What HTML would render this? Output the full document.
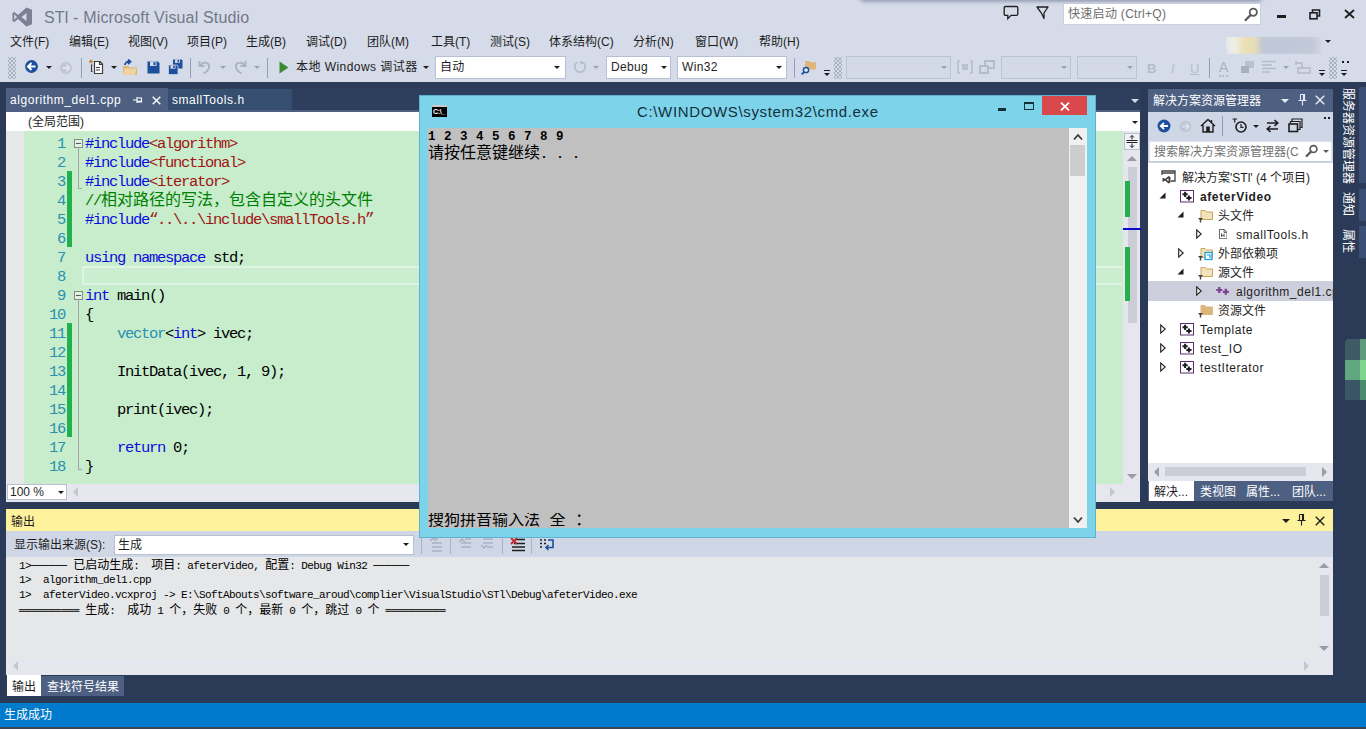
<!DOCTYPE html>
<html lang="zh-CN"><head><meta charset="utf-8"><title>STl - Microsoft Visual Studio</title>
<style>
*{box-sizing:border-box;margin:0;padding:0}
html,body{width:1366px;height:729px;overflow:hidden;background:#d6dbe9}
body{position:relative;font-family:"Liberation Sans","Noto Sans CJK SC",sans-serif;font-size:12px;color:#1e1e1e}
.a{position:absolute}
.t{position:absolute;white-space:nowrap;line-height:1}
.mono{font-family:"Liberation Mono","Noto Sans CJK SC",monospace}

/* top */
#title{left:44px;top:8px;font-size:16px;color:#737888;line-height:19px;letter-spacing:.16px}
.menu{position:absolute;top:34px;font-size:12px;line-height:16px;white-space:nowrap;color:#1b1b1c}
.sep{position:absolute;top:58px;width:1px;height:20px;background:#929db3}
.grip{position:absolute;width:8px;height:22px;top:57px;background-image:radial-gradient(circle,#8d97ab 0.6px,transparent 0.9px),radial-gradient(circle,#8d97ab 0.6px,transparent 0.9px);background-size:4px 4px;background-position:0 0,2px 2px}
.dd{position:absolute;width:0;height:0;border-left:3px solid transparent;border-right:3px solid transparent;border-top:3px solid #1e1e1e}
.dd.dis{border-top-color:#9aa3b5}
.combo{position:absolute;top:56px;height:23px;background:#fff;border:1px solid #b8c1d3;font-size:12px;line-height:21px;padding-left:4px;white-space:nowrap;color:#1e1e1e;letter-spacing:.35px}
.combo.dis{background:#d3d9e7;border-color:#bcc4d4}
.tbt{position:absolute;font-size:12px;line-height:16px;white-space:nowrap}

.w{color:#fff}
.tri-r{position:absolute;width:0;height:0}
.sbar{background:#e5e6ee}
.arr{position:absolute;width:0;height:0}
.row{position:absolute;font-size:12px;line-height:16px;white-space:nowrap;color:#1e1e1e}
.vt{position:absolute;transform-origin:0 0;transform:rotate(90deg);white-space:nowrap;font-size:12px;line-height:14px;color:#fff}
/* main frame */
#dark{left:0;top:82px;width:1366px;height:621px;background:#2a3a57}
#status{left:0;top:703px;width:1366px;height:24px;background:#007acc}
#bottom{left:0;top:727px;width:1366px;height:2px;background:#3b4454}
/* editor */
#tabstrip{left:6px;top:88px;width:1134px;height:22px}
#tab1{left:6px;top:88px;width:162px;height:22px;background:#4d6082}
#tab2{left:168px;top:89px;width:124px;height:21px;background:#364e6f}
#scope{left:6px;top:112px;width:1134px;height:19px;background:#fff}
#code{left:6px;top:131px;width:1134px;height:353px;background:#c7edcc}
#gutter{left:6px;top:131px;width:18px;height:353px;background:#e6e7e8}
#hscroll{left:6px;top:484px;width:1134px;height:17.5px;background:#e5e6ee}
.ln{position:absolute;left:24px;width:41px;text-align:right;color:#2b91af;font-size:15.5px;letter-spacing:-1.3px;margin-top:1.5px;line-height:19px;height:19px}
.cl{position:absolute;left:85px;font-size:15.5px;letter-spacing:-1.3px;margin-top:1.5px;line-height:19px;height:19px;white-space:pre;color:#000}
.cl .c{font-size:16px;letter-spacing:0}
.cl .q{display:inline-block;width:8px;letter-spacing:0;font-size:16px;overflow:visible;white-space:nowrap}
.k{color:#0c0ce0}.s{color:#a31515}.cm{color:#008000}.ty{color:#2b91af}
.chg{position:absolute;left:67px;width:5px;background:#22b14c}
/* output */
#outtitle{left:6px;top:508.5px;width:1327px;height:24px;background:#fff29d}
#outbar{left:6px;top:531px;width:1327px;height:26px;background:#cfd6e5}
#outtext{left:6px;top:557px;width:1327px;height:118px;background:#e6e7e8}
.ol{position:absolute;left:19px;font-size:11px;letter-spacing:-.6px;line-height:15px;height:15px;white-space:pre;color:#000}
.ol .c{font-size:12px;letter-spacing:0}
.ol .bx{font-family:"DejaVu Sans Mono",monospace;font-size:10px;letter-spacing:0}
/* solution explorer */
#setitle{left:1148px;top:89px;width:185px;height:23px;background:#4d6082}
#sebar{left:1148px;top:112px;width:185px;height:52px;background:#cfd6e5}
#sesearch{left:1149px;top:141px;width:183px;height:21px;background:#fff;border:1px solid #dfe3ec;border-bottom-color:#c4cad8}
#setree{left:1148px;top:163px;width:185px;height:318px;background:#fff}
/* cmd */
#cmd{left:419px;top:95px;width:677px;height:442.5px;background:#7dd3ea;border:1px solid #5eb4ce}
#con{left:428px;top:128px;width:658.5px;height:400px;background:#c0c0c0}
#conscroll{left:1069px;top:128px;width:17.5px;height:400px;background:#f0f0f0}
</style></head><body>
<div class="a" id="dark"></div>
<div class="a" id="status"></div>
<div class="a" id="bottom"></div>


<!-- TITLE BAR -->
<div class="a" style="left:862px;top:-5px;width:398px;height:5px;background:#9aa1b5;box-shadow:0 0 4px 1px rgba(80,90,120,.65)"></div>
<svg class="a" style="left:11.5px;top:6.5px" width="20.5" height="20" viewBox="0 0 22 21" preserveAspectRatio="none"><path d="M15.5 0.5 L21.5 3 V18 L15.5 20.5 L6.5 12.5 L2.5 15.8 L0.5 14.8 V6.2 L2.5 5.2 L6.5 8.5 Z M15.5 6.2 L10.2 10.5 L15.5 14.8 Z M2.4 7.6 V13.4 L5.4 10.5 Z" fill="#7b8192" fill-rule="evenodd"/></svg>
<div class="t" id="title">STl - Microsoft Visual Studio</div>
<svg class="a" style="left:1003px;top:5px" width="17" height="16" viewBox="0 0 17 16"><path d="M2.5 1.5 H13.5 Q14.8 1.5 14.8 2.8 V9 Q14.8 10.3 13.5 10.3 H8 L4.8 13.6 V10.3 H2.5 Q1.2 10.3 1.2 9 V2.8 Q1.2 1.5 2.5 1.5 Z" fill="none" stroke="#1e1e1e" stroke-width="1.3"/></svg>
<svg class="a" style="left:1036px;top:6px" width="14" height="14" viewBox="0 0 14 14"><path d="M1 1 H12 L8 7 V12.5 L5.2 6.8 Z" fill="none" stroke="#1e1e1e" stroke-width="1.3" stroke-linejoin="round"/></svg>
<div class="a" style="left:1063px;top:3px;width:198px;height:22px;background:#fff;border:1px solid #c9cfdd"></div>
<div class="t" style="left:1068px;top:7px;font-size:12px;line-height:15px;color:#6d6d6d;letter-spacing:.3px">快速启动 (Ctrl+Q)</div>
<svg class="a" style="left:1244px;top:7px" width="15" height="15" viewBox="0 0 15 15"><circle cx="9.3" cy="5.3" r="3.6" fill="none" stroke="#5b5b5b" stroke-width="1.8"/><path d="M6.6 8 L1.6 13" stroke="#5b5b5b" stroke-width="2.4" stroke-linecap="round"/></svg>
<div class="a" style="left:1277px;top:15px;width:9px;height:3px;background:#1e1e1e"></div>
<svg class="a" style="left:1309px;top:9px" width="12" height="11" viewBox="0 0 12 11"><path d="M3.5 3 V1 H10.5 V7 H8.5" fill="none" stroke="#1e1e1e" stroke-width="1.6"/><rect x="1" y="3.8" width="7" height="6" fill="none" stroke="#1e1e1e" stroke-width="1.6"/></svg>
<svg class="a" style="left:1344px;top:9px" width="11" height="10" viewBox="0 0 11 10"><path d="M1 1 L10 9 M10 1 L1 9" stroke="#1e1e1e" stroke-width="1.8"/></svg>

<!-- MENU -->
<div class="menu" style="left:10px">文件(F)</div>
<div class="menu" style="left:69px">编辑(E)</div>
<div class="menu" style="left:128px">视图(V)</div>
<div class="menu" style="left:187px">项目(P)</div>
<div class="menu" style="left:246px">生成(B)</div>
<div class="menu" style="left:306px">调试(D)</div>
<div class="menu" style="left:367px">团队(M)</div>
<div class="menu" style="left:431px">工具(T)</div>
<div class="menu" style="left:490px">测试(S)</div>
<div class="menu" style="left:549px">体系结构(C)</div>
<div class="menu" style="left:633px">分析(N)</div>
<div class="menu" style="left:695px">窗口(W)</div>
<div class="menu" style="left:759px">帮助(H)</div>
<div class="a" style="left:1226px;top:33px;width:96px;height:23px;filter:blur(3px);background:linear-gradient(90deg,#e9ebf2 0,#f2f0e2 12%,#e9dfb4 16%,#e9dfb4 32%,#bec5d6 36%,#c3c9d9 92%,#d6dbe9 100%);border-radius:4px;clip-path:inset(4px 0 2px 0)"></div>
<div class="dd" style="left:1325px;top:40px"></div>

<!-- TOOLBAR -->
<div class="grip" style="left:8px"></div>
<svg class="a" style="left:24px;top:59px" width="15" height="15" viewBox="0 0 15 15"><circle cx="7.5" cy="7.5" r="6.4" fill="#1c4f9c"/><path d="M11.5 7.5 H4.5 M7.5 4 L4 7.5 L7.5 11" fill="none" stroke="#fff" stroke-width="2"/></svg>
<div class="dd" style="left:46px;top:66px"></div>
<svg class="a" style="left:59px;top:61px" width="14" height="14" viewBox="0 0 14 14"><circle cx="7" cy="7" r="6" fill="#bfc6d4"/><path d="M3.5 7 H10 M7.5 4 L10.5 7 L7.5 10" fill="none" stroke="#dfe3ec" stroke-width="1.8"/></svg>
<div class="sep" style="left:81px"></div>
<svg class="a" style="left:89px;top:59px" width="16" height="17" viewBox="0 0 16 17"><path d="M1 1.5 l2 2 m0 -2 l-2 2 M2 0.5 v4 M0 2.5 h4" stroke="#c27d1a" stroke-width="1"/><path d="M5.5 2.5 H11 L13.5 5 V14.5 H5.5 Z M10.5 2.5 V5.5 H13.5" fill="#fff" stroke="#3b3b3b" stroke-width="1.2"/><path d="M3.5 6 H2.5 V12.5 H3.5 M7 8.5 h4 M7 11 h4" fill="none" stroke="#3b3b3b" stroke-width="1.1"/></svg>
<div class="dd" style="left:111px;top:66px"></div>
<svg class="a" style="left:122px;top:59px" width="16" height="17" viewBox="0 0 16 17"><path d="M1 7 H6 L7.5 8.5 H15 V16 H1 Z" fill="#dcb67a"/><path d="M2.5 9.5 H14.5 L13 16 H1 Z" fill="#efd4a2"/><path d="M3 6 Q3 2.5 8 2.5 M6 0.5 L8.5 2.5 L6 5" fill="none" stroke="#1c4f9c" stroke-width="1.8"/></svg>
<svg class="a" style="left:147px;top:61px" width="13" height="13" viewBox="0 0 13 13"><path d="M0.5 0.5 H11 L12.5 2 V12.5 H0.5 Z" fill="#1c4f9c"/><rect x="3" y="0.5" width="6.5" height="4.5" fill="#d6dbe9"/><rect x="6.5" y="1.2" width="2" height="3" fill="#1c4f9c"/></svg>
<svg class="a" style="left:168px;top:59px" width="15" height="16" viewBox="0 0 15 16"><path d="M5 0.5 H13.5 L14.5 1.5 V9.5 H5 Z" fill="#1c4f9c"/><rect x="7" y="0.5" width="5" height="3.3" fill="#d6dbe9"/><rect x="9.6" y="1" width="1.5" height="2.2" fill="#1c4f9c"/><path d="M0.5 6 H9 L10 7 V15.5 H0.5 Z" fill="#1c4f9c" stroke="#cfd6e5" stroke-width="0.8"/><rect x="2.5" y="6.4" width="5" height="3.3" fill="#d6dbe9"/><rect x="5.2" y="6.9" width="1.5" height="2.2" fill="#1c4f9c"/></svg>
<div class="sep" style="left:190px"></div>
<svg class="a" style="left:198px;top:60px" width="14" height="15" viewBox="0 0 14 15"><path d="M1.5 1 V6 H6.5 M2 5.5 Q5 1.5 9 3 Q12.5 5 10.5 9 Q9 12 5.5 13.5" fill="none" stroke="#a9b1c3" stroke-width="1.8"/></svg>
<div class="dd dis" style="left:220px;top:66px"></div>
<svg class="a" style="left:233px;top:60px" width="14" height="15" viewBox="0 0 14 15"><path d="M12.5 1 V6 H7.5 M12 5.5 Q9 1.5 5 3 Q1.5 5 3.5 9 Q5 12 8.5 13.5" fill="none" stroke="#a9b1c3" stroke-width="1.8"/></svg>
<div class="dd dis" style="left:254px;top:66px"></div>
<div class="sep" style="left:267px"></div>
<svg class="a" style="left:279px;top:61px" width="10" height="13" viewBox="0 0 10 13"><path d="M0.5 0.5 L9.5 6.5 L0.5 12.5 Z" fill="#388a34"/></svg>
<div class="tbt" style="left:296px;top:59px;letter-spacing:.45px;color:#222">本地 Windows 调试器</div>
<div class="dd" style="left:423px;top:66px"></div>
<div class="combo" style="left:435px;width:131px">自动</div>
<div class="dd" style="left:554px;top:66px"></div>
<svg class="a" style="left:573px;top:60px" width="14" height="14" viewBox="0 0 14 14"><path d="M9.5 2.2 A5.3 5.3 0 1 1 4.5 2.2" fill="none" stroke="#b3bac9" stroke-width="1.6"/><path d="M7 0.5 L10.5 2.3 L7.5 4.8 Z" fill="#b3bac9"/></svg>
<div class="dd dis" style="left:593px;top:66px"></div>
<div class="combo" style="left:606px;width:65px">Debug</div>
<div class="dd" style="left:661px;top:66px"></div>
<div class="combo" style="left:677px;width:110px">Win32</div>
<div class="dd" style="left:776px;top:66px"></div>
<div class="sep" style="left:794px"></div>
<svg class="a" style="left:801px;top:60px" width="16" height="16" viewBox="0 0 16 16"><path d="M4 1 H8 L9.2 2.2 H15 V9.5 H4 Z" fill="#dcb67a"/><circle cx="5" cy="10" r="2.6" fill="#e8ecf4" stroke="#1c4f9c" stroke-width="1.5"/><path d="M3.2 11.8 L0.8 14.4" stroke="#1c4f9c" stroke-width="1.8"/></svg>
<div class="a" style="left:824px;top:70px;width:6px;height:1px;background:#1e1e1e"></div>
<div class="dd" style="left:824px;top:73px"></div>
<div class="grip" style="left:834px"></div>
<div class="combo dis" style="left:846px;width:105px"></div>
<div class="dd dis" style="left:941px;top:66px"></div>
<svg class="a" style="left:957px;top:60px" width="16" height="14" viewBox="0 0 16 14"><path d="M3 1 H1 V13 H3 M13 1 H15 V13 H13" fill="none" stroke="#aab2c4" stroke-width="1.2"/><rect x="5" y="4" width="6" height="6" fill="#b9c0d0"/></svg>
<svg class="a" style="left:979px;top:60px" width="16" height="14" viewBox="0 0 16 14"><rect x="6" y="1" width="9" height="7" fill="none" stroke="#aab2c4" stroke-width="1.5"/><rect x="1" y="6" width="8" height="7" fill="#d3d9e7" stroke="#aab2c4" stroke-width="1.5"/></svg>
<div class="combo dis" style="left:1001px;width:70px"></div>
<div class="dd dis" style="left:1061px;top:66px"></div>
<div class="combo dis" style="left:1077px;width:60px"></div>
<div class="dd dis" style="left:1127px;top:66px"></div>
<div class="tbt" style="left:1147px;top:60.5px;font-size:13px;font-weight:bold;color:#b4bbcb">B</div>
<div class="tbt" style="left:1171px;top:60.5px;font-size:13px;font-style:italic;color:#b4bbcb">I</div>
<div class="tbt" style="left:1190px;top:60.5px;font-size:13px;text-decoration:underline;color:#b4bbcb">U</div>
<div class="sep" style="left:1209px"></div>
<div class="tbt" style="left:1219px;top:59.5px;font-size:14px;color:#aab2c4;border-bottom:2px dotted #b4bbcb;line-height:15px">A</div>
<svg class="a" style="left:1240px;top:60px" width="15" height="15" viewBox="0 0 15 15"><rect x="5" y="1" width="9" height="7" fill="#b9c0d0"/><rect x="1" y="6" width="8" height="7" fill="#a7afc1"/></svg>
<svg class="a" style="left:1262px;top:60px" width="15" height="14" viewBox="0 0 15 14"><path d="M0 1.5 H14 M0 5 H10 M0 8.5 H14 M0 12 H8" stroke="#b4bbcb" stroke-width="1.5"/></svg>
<div class="dd dis" style="left:1283px;top:66px"></div>
<svg class="a" style="left:1295px;top:60px" width="16" height="15" viewBox="0 0 16 15"><path d="M1 3 H7 V8 M1 1 V5" fill="none" stroke="#b4bbcb" stroke-width="1.5"/><rect x="3" y="8" width="12" height="5" fill="none" stroke="#b4bbcb" stroke-width="1.5"/></svg>
<div class="a" style="left:1319px;top:70px;width:6px;height:1px;background:#1e1e1e"></div>
<div class="dd" style="left:1319px;top:73px"></div>
<div class="grip" style="left:1329px"></div>
<div class="a" style="left:1342px;top:61px;width:2px;height:2px;background:#1e1e1e"></div>
<div class="a" style="left:1347px;top:61px;width:2px;height:2px;background:#1e1e1e"></div>
<div class="a" style="left:1341px;top:70px;width:6px;height:1px;background:#1e1e1e"></div>
<div class="dd" style="left:1341px;top:73px"></div>

<!-- EDITOR -->
<div class="a" style="left:6px;top:88px;width:1134px;height:22px;background:#2e3f5e"></div>
<div class="a" id="tab1"></div>
<div class="a" id="tab2"></div>
<div class="a" id="scope"></div>
<div class="a" id="code"></div>
<div class="a" id="gutter"></div>
<div class="a" id="hscroll"></div>
<div class="a" style="left:6px;top:110px;width:1134px;height:2px;background:#4d6082"></div>
<div class="t w" style="left:10px;top:92px;font-size:12px;line-height:16px;letter-spacing:.55px">algorithm_del1.cpp</div>
<svg class="a" style="left:133px;top:95px" width="10" height="10" viewBox="0 0 10 10"><path d="M0 5 H4 M4 2 V8 M4 3 H8.5 V7 H4 M4 6.2 H8.5" fill="none" stroke="#fff" stroke-width="1.1"/></svg>
<svg class="a" style="left:152px;top:96px" width="9" height="9" viewBox="0 0 9 9"><path d="M0.7 0.7 L8.3 8.3 M8.3 0.7 L0.7 8.3" stroke="#fff" stroke-width="1.4"/></svg>
<div class="t w" style="left:172px;top:92px;font-size:12px;line-height:16px;letter-spacing:.55px;letter-spacing:.55px">smallTools.h</div>
<div class="arr" style="left:1131px;top:99px;border-left:4px solid transparent;border-right:4px solid transparent;border-top:4px solid #d6dbe9"></div>
<div class="t" style="left:28px;top:114px;font-size:12px;line-height:16px">(全局范围)</div>
<div class="dd" style="left:1132px;top:121px"></div>


<!-- CODE -->
<div class="ln mono" style="top:133px">1</div>
<div class="cl mono" style="top:133px"><span class="k">#include</span><span class="s">&lt;algorithm&gt;</span></div>
<div class="ln mono" style="top:152px">2</div>
<div class="cl mono" style="top:152px"><span class="k">#include</span><span class="s">&lt;functional&gt;</span></div>
<div class="ln mono" style="top:171px">3</div>
<div class="cl mono" style="top:171px"><span class="k">#include</span><span class="s">&lt;iterator&gt;</span></div>
<div class="ln mono" style="top:190px">4</div>
<div class="cl mono" style="top:190px"><span class="cm">//<span class="c">相对路径的写法，包含自定义的头文件</span></span></div>
<div class="ln mono" style="top:209px">5</div>
<div class="cl mono" style="top:209px"><span class="k">#include</span><span class="s"><span class="q">“</span>..\..\include\smallTools.h<span class="q">”</span></span></div>
<div class="ln mono" style="top:228px">6</div>
<div class="ln mono" style="top:247px">7</div>
<div class="cl mono" style="top:247px"><span class="k">using</span> <span class="k">namespace</span> std;</div>
<div class="ln mono" style="top:266px">8</div>
<div class="ln mono" style="top:285px">9</div>
<div class="cl mono" style="top:285px"><span class="k">int</span> main()</div>
<div class="ln mono" style="top:304px">10</div>
<div class="cl mono" style="top:304px">{</div>
<div class="ln mono" style="top:323px">11</div>
<div class="cl mono" style="top:323px">    <span class="ty">vector</span>&lt;<span class="k">int</span>&gt; ivec;</div>
<div class="ln mono" style="top:342px">12</div>
<div class="ln mono" style="top:361px">13</div>
<div class="cl mono" style="top:361px">    InitData(ivec, 1, 9);</div>
<div class="ln mono" style="top:380px">14</div>
<div class="ln mono" style="top:399px">15</div>
<div class="cl mono" style="top:399px">    print(ivec);</div>
<div class="ln mono" style="top:418px">16</div>
<div class="ln mono" style="top:437px">17</div>
<div class="cl mono" style="top:437px">    <span class="k">return</span> 0;</div>
<div class="ln mono" style="top:456px">18</div>
<div class="cl mono" style="top:456px">}</div>
<div class="chg" style="top:171px;height:76px"></div>
<div class="chg" style="top:323px;height:114px"></div>

<!-- editor adornments -->
<div class="a" style="left:82px;top:266px;width:1040px;height:19px;border:2px solid #e0f4e3;border-right:0;background:#caeecf"></div>
<div class="a" style="left:74px;top:139px;width:9px;height:9px;border:1px solid #8a8a8a;background:#dff3e2"></div>
<div class="a" style="left:76px;top:143px;width:5px;height:1px;background:#555"></div>
<div class="a" style="left:78px;top:148px;width:1px;height:41px;background:#a5a5a5"></div>
<div class="a" style="left:78px;top:188px;width:4px;height:1px;background:#a5a5a5"></div>
<div class="a" style="left:74px;top:291px;width:9px;height:9px;border:1px solid #8a8a8a;background:#dff3e2"></div>
<div class="a" style="left:76px;top:295px;width:5px;height:1px;background:#555"></div>
<div class="a" style="left:78px;top:300px;width:1px;height:170px;background:#a5a5a5"></div>
<div class="a" style="left:78px;top:469px;width:4px;height:1px;background:#a5a5a5"></div>
<!-- editor v-scroll -->
<div class="a sbar" style="left:1123px;top:131px;width:17px;height:353px"></div>
<div class="a" style="left:1124px;top:133px;width:16px;height:17px;background:#f2f3f7;border:1px solid #b9bfcc"></div>
<svg class="a" style="left:1126px;top:135px" width="12" height="13" viewBox="0 0 12 13"><path d="M0.5 5.5 H11.5 M0.5 7.5 H11.5 M6 0.5 V4.5 M6 8.5 V12.5 M4 2.5 L6 0.5 L8 2.5 M4 10.5 L6 12.5 L8 10.5" fill="none" stroke="#1e1e1e" stroke-width="1"/></svg>
<div class="arr" style="left:1127px;top:156px;border-left:5px solid transparent;border-right:5px solid transparent;border-bottom:5px solid #9a9ba3"></div>
<div class="a" style="left:1128px;top:167px;width:9px;height:156px;background:#cbcdd7"></div>
<div class="a" style="left:1125px;top:181px;width:5px;height:36px;background:#22b14c"></div>
<div class="a" style="left:1125px;top:247px;width:5px;height:54px;background:#22b14c"></div>
<div class="a" style="left:1123px;top:228px;width:18px;height:2px;background:#0a0acd"></div>
<div class="arr" style="left:1127px;top:473.5px;border-left:5px solid transparent;border-right:5px solid transparent;border-top:5px solid #9a9ba3"></div>
<!-- editor bottom -->
<div class="a" style="left:7px;top:484px;width:60px;height:16px;background:#fff;border:1px solid #b8c1d3"></div>
<div class="t" style="left:10px;top:486px;font-size:12px;line-height:13px">100 %</div>
<div class="dd" style="left:58px;top:491px"></div>
<div class="arr" style="left:73px;top:487px;border-top:5px solid transparent;border-bottom:5px solid transparent;border-right:5px solid #c5c7cf"></div>
<div class="arr" style="left:1110px;top:487px;border-top:5px solid transparent;border-bottom:5px solid transparent;border-left:5px solid #c5c7cf"></div>

<!-- OUTPUT -->
<div class="a" id="outtitle"></div>
<div class="a" id="outbar"></div>
<div class="a" id="outtext"></div>

<div class="t" style="left:11px;top:514px;font-size:12px;line-height:16px">输出</div>
<div class="dd" style="left:1282px;top:519px;border-left-width:4px;border-right-width:4px;border-top-width:4px"></div>
<svg class="a" style="left:1297px;top:514px" width="9" height="12" viewBox="0 0 9 12"><path d="M2.5 0.5 H6.5 V6.5 M2.5 0.5 V6.5 M0.5 6.5 H8.5 M4.5 6.5 V11.5 M5.5 1 V6" fill="none" stroke="#1e1e1e" stroke-width="1.1"/></svg>
<svg class="a" style="left:1315px;top:516px" width="10" height="10" viewBox="0 0 10 10"><path d="M0.8 0.8 L9.2 9.2 M9.2 0.8 L0.8 9.2" stroke="#1e1e1e" stroke-width="1.4"/></svg>
<div class="t" style="left:14px;top:537px;font-size:12px;line-height:16px">显示输出来源(S):</div>
<div class="a" style="left:114px;top:535px;width:300px;height:20px;background:#fff;border:1px solid #b8c1d3"></div>
<div class="t" style="left:118px;top:537px;font-size:12px;line-height:16px">生成</div>
<div class="dd" style="left:403px;top:543px"></div>
<div class="sep" style="left:421px;top:536px;height:18px;background:#aab2c4"></div>
<svg class="a" style="left:429px;top:537px" width="16" height="16" viewBox="0 0 16 16"><path d="M3 2 H9 M3 6 H13 M3 10 H13 M3 14 H13 M1 4 L4 1 L7 4" fill="none" stroke="#aab2c4" stroke-width="1.5"/></svg>
<div class="sep" style="left:450px;top:536px;height:18px;background:#aab2c4"></div>
<svg class="a" style="left:458px;top:537px" width="16" height="16" viewBox="0 0 16 16"><path d="M7 2 H13 M3 6 H13 M3 10 H13 M1 5 L4 2 L7 5" fill="none" stroke="#aab2c4" stroke-width="1.5"/></svg>
<svg class="a" style="left:480px;top:537px" width="16" height="16" viewBox="0 0 16 16"><path d="M3 2 H13 M3 6 H13 M7 10 H13 M1 8 L4 11 L7 8" fill="none" stroke="#aab2c4" stroke-width="1.5"/></svg>
<div class="sep" style="left:502px;top:536px;height:18px;background:#aab2c4"></div>
<svg class="a" style="left:510px;top:537px" width="16" height="16" viewBox="0 0 16 16"><path d="M6 2.5 H15 M4 6.5 H15 M2 10 H15 M2 13.5 H15" stroke="#1e1e1e" stroke-width="1.5"/><path d="M1 1 L7 7 M7 1 L1 7" stroke="#c0272d" stroke-width="1.8"/></svg>
<div class="sep" style="left:531px;top:536px;height:18px;background:#aab2c4"></div>
<svg class="a" style="left:539px;top:538px" width="16" height="14" viewBox="0 0 16 14"><path d="M1 2 h2 M5 2 h2 M1 5.5 h2 M5 5.5 h2 M1 9 h2" stroke="#1e1e1e" stroke-width="1.6"/><path d="M9 2 H14 V9.5 H7 M9.5 7 L7 9.5 L9.5 12" fill="none" stroke="#1c4f9c" stroke-width="1.6"/></svg>
<!-- output scrollbars -->
<div class="a sbar" style="left:1316px;top:557px;width:17px;height:101px"></div>
<div class="a sbar" style="left:6px;top:658px;width:1327px;height:17px"></div>
<div class="arr" style="left:1319px;top:563px;border-left:5px solid transparent;border-right:5px solid transparent;border-bottom:5px solid #9a9ba3"></div>
<div class="a" style="left:1320px;top:575px;width:9px;height:41px;background:#cbcdd7"></div>
<div class="arr" style="left:1319px;top:646px;border-left:5px solid transparent;border-right:5px solid transparent;border-top:5px solid #9a9ba3"></div>
<div class="arr" style="left:13px;top:661px;border-top:5px solid transparent;border-bottom:5px solid transparent;border-right:5px solid #c5c7cf"></div>
<div class="arr" style="left:1304px;top:661px;border-top:5px solid transparent;border-bottom:5px solid transparent;border-left:5px solid #c5c7cf"></div>
<!-- output text -->
<div class="ol mono" style="top:558px">1&gt;<span class="bx">──────</span> <span class="c">已启动生成</span>:  <span class="c">项目</span>: afeterVideo, <span class="c">配置</span>: Debug Win32 <span class="bx">──────</span></div>
<div class="ol mono" style="top:573px">1&gt;  algorithm_del1.cpp</div>
<div class="ol mono" style="top:588px">1&gt;  afeterVideo.vcxproj -&gt; E:\SoftAbouts\software_aroud\complier\VisualStudio\STl\Debug\afeterVideo.exe</div>
<div class="ol mono" style="top:603px"><span class="bx">══════════</span> <span class="c">生成</span>:  <span class="c">成功</span> 1 <span class="c">个，失败</span> 0 <span class="c">个，最新</span> 0 <span class="c">个，跳过</span> 0 <span class="c">个</span> <span class="bx">══════════</span></div>
<!-- bottom tabs -->
<div class="a" style="left:7px;top:675px;width:34px;height:21px;background:#fff"></div>
<div class="t" style="left:12px;top:679px;font-size:12px;line-height:16px">输出</div>
<div class="a" style="left:41px;top:676px;width:83px;height:20px;background:#4d6082"></div>
<div class="t w" style="left:47px;top:679px;font-size:12px;line-height:16px">查找符号结果</div>
<div class="t w" style="left:4px;top:707px;font-size:12px;line-height:16px">生成成功</div>

<!-- SOLUTION EXPLORER -->
<div class="a" id="setitle"></div>
<div class="a" id="sebar"></div>
<div class="a" id="setree"></div>
<div class="a" id="sesearch"></div>

<div class="t w" style="left:1153px;top:93px;font-size:12px;line-height:16px">解决方案资源管理器</div>
<div class="arr" style="left:1281px;top:99px;border-left:4px solid transparent;border-right:4px solid transparent;border-top:4px solid #e8ecf5"></div>
<svg class="a" style="left:1298px;top:94px" width="9" height="12" viewBox="0 0 9 12"><path d="M2.5 0.5 H6.5 V6.5 M2.5 0.5 V6.5 M0.5 6.5 H8.5 M4.5 6.5 V11.5 M5.5 1 V6" fill="none" stroke="#e8ecf5" stroke-width="1.1"/></svg>
<svg class="a" style="left:1315px;top:95px" width="10" height="10" viewBox="0 0 10 10"><path d="M0.8 0.8 L9.2 9.2 M9.2 0.8 L0.8 9.2" stroke="#e8ecf5" stroke-width="1.4"/></svg>
<svg class="a" style="left:1157px;top:119px" width="14" height="14" viewBox="0 0 14 14"><circle cx="7" cy="7" r="6.5" fill="#1c4f9c"/><path d="M11 7 H4.3 M7 3.8 L3.8 7 L7 10.2" fill="none" stroke="#fff" stroke-width="1.9"/></svg>
<svg class="a" style="left:1179px;top:120px" width="13" height="13" viewBox="0 0 13 13"><circle cx="6.5" cy="6.5" r="5.8" fill="#bfc6d4"/><path d="M3 6.5 H9.5 M7 3.7 L9.8 6.5 L7 9.3" fill="none" stroke="#dfe3ec" stroke-width="1.7"/></svg>
<svg class="a" style="left:1200px;top:118px" width="16" height="15" viewBox="0 0 16 15"><path d="M1 8 L8 1.5 L15 8 M3 7 V14 H13 V7 M11.5 2 V5" fill="none" stroke="#1e1e1e" stroke-width="1.4"/><rect x="6.2" y="8.5" width="3.6" height="5.5" fill="#1e1e1e"/></svg>
<div class="sep" style="left:1222px;top:116px;height:20px"></div>
<svg class="a" style="left:1232px;top:118px" width="16" height="16" viewBox="0 0 16 16"><circle cx="9" cy="9" r="5" fill="none" stroke="#1e1e1e" stroke-width="1.6"/><path d="M9 6 V9.3 H11.5 M0.5 1 H5 M2.7 1 V4.5" fill="none" stroke="#1e1e1e" stroke-width="1.2"/></svg>
<div class="dd" style="left:1253px;top:125px"></div>
<svg class="a" style="left:1266px;top:119px" width="13" height="14" viewBox="0 0 13 14"><path d="M1 4 H11.5 M8.5 1 L11.8 4 L8.5 7 M12 10 H1.5 M4.5 7 L1.2 10 L4.5 13" fill="none" stroke="#1e1e1e" stroke-width="1.6"/></svg>
<svg class="a" style="left:1288px;top:118px" width="15" height="15" viewBox="0 0 15 15"><path d="M4 3.5 V1 H14 V9.5 H11.5 M2.5 5.5 V3.5 H12 V11.5 H10" fill="none" stroke="#1e1e1e" stroke-width="1.2"/><rect x="1" y="6" width="8.5" height="7.5" fill="none" stroke="#1e1e1e" stroke-width="1.6"/></svg>
<div class="a" style="left:1324px;top:117px;width:2px;height:2px;background:#1e1e1e"></div><div class="a" style="left:1328px;top:117px;width:2px;height:2px;background:#1e1e1e"></div>
<div class="t" style="left:1154px;top:144px;font-size:12px;line-height:16px;color:#717171">搜索解决方案资源管理器(C</div>
<svg class="a" style="left:1305px;top:144px" width="14" height="14" viewBox="0 0 14 14"><circle cx="8.5" cy="5" r="3.4" fill="none" stroke="#5b5b5b" stroke-width="1.7"/><path d="M6 7.6 L1.6 12" stroke="#5b5b5b" stroke-width="2.2" stroke-linecap="round"/></svg>
<div class="dd" style="left:1323px;top:150px;border-top-color:#5b5b5b"></div>
<div class="a" id="tree" style="left:0;top:1px;width:0;height:0">
<div class="a" style="left:1148px;top:280px;width:185px;height:19.5px;background:#cccedb"></div>
<svg class="a" style="left:1161px;top:169px" width="15" height="14" viewBox="0 0 15 14"><path d="M1 5 V1 H14 V11 H10" fill="none" stroke="#424242" stroke-width="1.3"/><path d="M1 3 H14" stroke="#424242" stroke-width="1.5"/><path d="M7.5 6 L9.5 7 V12.5 L7.5 13.5 L4 10.5 L2.5 11.7 L1.5 11.2 V8.3 L2.5 7.8 L4 9 Z M7.5 8.3 L5.5 9.75 L7.5 11.2 Z" fill="#424242" fill-rule="evenodd"/></svg>
<div class="row" style="left:1182px;top:169px">解决方案'STl' (4 个项目)</div>
<svg class="a" style="left:1159px;top:191px" width="7" height="7" viewBox="0 0 7 7"><path d="M6.5 0.5 V6.5 H0.5 Z" fill="#1e1e1e"/></svg>
<svg class="a" style="left:1180px;top:189px" width="14" height="14" viewBox="0 0 14 14"><rect x="0.5" y="0.5" width="13" height="11.5" fill="#fff" stroke="#5c2d6e" stroke-width="1"/><path d="M2.5 4.3 H7.7 M5.1 1.8 V6.9 M6.3 8 H11.5 M8.9 5.5 V10.6" stroke="#1e1e1e" stroke-width="2"/><rect x="8" y="2" width="3" height="3" fill="#1e1e1e" opacity=".0"/></svg>
<div class="row" style="left:1200px;top:188px;font-weight:bold;letter-spacing:.6px">afeterVideo</div>
<svg class="a" style="left:1177px;top:210px" width="7" height="7" viewBox="0 0 7 7"><path d="M6.5 0.5 V6.5 H0.5 Z" fill="#1e1e1e"/></svg>
<svg class="a" style="left:1198px;top:208px" width="15" height="14" viewBox="0 0 15 14"><path d="M3 1.5 H7 L8.2 3 H14.5 V10.5 H3 Z" fill="#f3e3bd" stroke="#c9a45c" stroke-width="1"/><path d="M0 9 H5 L3.2 11 V13.5 H1.8 V11 Z" fill="#424242"/></svg>
<div class="row" style="left:1218px;top:207px">头文件</div>
<svg class="a" style="left:1196px;top:228px" width="6" height="10" viewBox="0 0 6 10"><path d="M0.7 0.9 L5.2 5 L0.7 9.1 Z" fill="#fff" stroke="#1e1e1e" stroke-width="1.1"/></svg>
<svg class="a" style="left:1218.5px;top:228px" width="8.5" height="10.2" viewBox="0 0 10 12"><path d="M0.5 0.5 H6 L9.5 4 V11.5 H0.5 Z M6 0.5 V4 H9.5" fill="#fff" stroke="#424242" stroke-width="1"/><path d="M3 5 V9.5 M3 7.5 H6 V9.5 M6 5.5 V7.5" fill="none" stroke="#424242" stroke-width="1"/></svg>
<div class="row" style="left:1236px;top:226px;letter-spacing:.55px">smallTools.h</div>
<svg class="a" style="left:1178px;top:247px" width="6" height="10" viewBox="0 0 6 10"><path d="M0.7 0.9 L5.2 5 L0.7 9.1 Z" fill="#fff" stroke="#1e1e1e" stroke-width="1.1"/></svg>
<svg class="a" style="left:1198px;top:246px" width="15" height="14" viewBox="0 0 15 14"><path d="M3 1.5 H7 L8.2 3 H14.5 V10.5 H3 Z" fill="#f3e3bd" stroke="#c9a45c" stroke-width="1"/><path d="M0 9 H5 L3.2 11 V13.5 H1.8 V11 Z" fill="#424242"/><rect x="7" y="5.5" width="7" height="7" fill="#fff" stroke="#1ba1e2" stroke-width="1.3"/><path d="M9 8 H12 V11" fill="none" stroke="#1ba1e2" stroke-width="1.2"/></svg>
<div class="row" style="left:1218px;top:245px">外部依赖项</div>
<svg class="a" style="left:1177px;top:267px" width="7" height="7" viewBox="0 0 7 7"><path d="M6.5 0.5 V6.5 H0.5 Z" fill="#1e1e1e"/></svg>
<svg class="a" style="left:1198px;top:265px" width="15" height="14" viewBox="0 0 15 14"><path d="M3 1.5 H7 L8.2 3 H14.5 V10.5 H3 Z" fill="#f3e3bd" stroke="#c9a45c" stroke-width="1"/><path d="M0 9 H5 L3.2 11 V13.5 H1.8 V11 Z" fill="#424242"/></svg>
<div class="row" style="left:1218px;top:264px">源文件</div>
<svg class="a" style="left:1196px;top:285px" width="6" height="10" viewBox="0 0 6 10"><path d="M0.7 0.9 L5.2 5 L0.7 9.1 Z" fill="#fff" stroke="#1e1e1e" stroke-width="1.1"/></svg>
<svg class="a" style="left:1216px;top:285px" width="14" height="11" viewBox="0 0 14 11"><path d="M0.3 4 H6.3 M3.3 1 V7 M6.8 5.8 H12.8 M9.8 2.8 V8.8" stroke="#7b3f93" stroke-width="2.2"/></svg>
<div class="row" style="left:1236px;top:283px;width:97px;overflow:hidden;letter-spacing:.5px">algorithm_del1.cpp</div>
<svg class="a" style="left:1198px;top:303px" width="15" height="14" viewBox="0 0 15 14"><path d="M3 1.5 H7 L8.2 3 H14.5 V10.5 H3 Z" fill="#dcb67a" stroke="#dcb67a" stroke-width="1"/><path d="M0 9 H5 L3.2 11 V13.5 H1.8 V11 Z" fill="#424242"/></svg>
<div class="row" style="left:1218px;top:302px">资源文件</div>
<svg class="a" style="left:1160px;top:323px" width="6" height="10" viewBox="0 0 6 10"><path d="M0.7 0.9 L5.2 5 L0.7 9.1 Z" fill="#fff" stroke="#1e1e1e" stroke-width="1.1"/></svg>
<svg class="a" style="left:1180px;top:322px" width="14" height="14" viewBox="0 0 14 14"><rect x="0.5" y="0.5" width="13" height="11.5" fill="#fff" stroke="#5c2d6e" stroke-width="1"/><path d="M2.5 4.3 H7.7 M5.1 1.8 V6.9 M6.3 8 H11.5 M8.9 5.5 V10.6" stroke="#1e1e1e" stroke-width="2"/><rect x="8" y="2" width="3" height="3" fill="#1e1e1e" opacity=".0"/></svg>
<div class="row" style="left:1200px;top:321px;letter-spacing:.55px">Template</div>
<svg class="a" style="left:1160px;top:342px" width="6" height="10" viewBox="0 0 6 10"><path d="M0.7 0.9 L5.2 5 L0.7 9.1 Z" fill="#fff" stroke="#1e1e1e" stroke-width="1.1"/></svg>
<svg class="a" style="left:1180px;top:341px" width="14" height="14" viewBox="0 0 14 14"><rect x="0.5" y="0.5" width="13" height="11.5" fill="#fff" stroke="#5c2d6e" stroke-width="1"/><path d="M2.5 4.3 H7.7 M5.1 1.8 V6.9 M6.3 8 H11.5 M8.9 5.5 V10.6" stroke="#1e1e1e" stroke-width="2"/><rect x="8" y="2" width="3" height="3" fill="#1e1e1e" opacity=".0"/></svg>
<div class="row" style="left:1200px;top:340px;letter-spacing:.55px">test_IO</div>
<svg class="a" style="left:1160px;top:361px" width="6" height="10" viewBox="0 0 6 10"><path d="M0.7 0.9 L5.2 5 L0.7 9.1 Z" fill="#fff" stroke="#1e1e1e" stroke-width="1.1"/></svg>
<svg class="a" style="left:1180px;top:360px" width="14" height="14" viewBox="0 0 14 14"><rect x="0.5" y="0.5" width="13" height="11.5" fill="#fff" stroke="#5c2d6e" stroke-width="1"/><path d="M2.5 4.3 H7.7 M5.1 1.8 V6.9 M6.3 8 H11.5 M8.9 5.5 V10.6" stroke="#1e1e1e" stroke-width="2"/><rect x="8" y="2" width="3" height="3" fill="#1e1e1e" opacity=".0"/></svg>
<div class="row" style="left:1200px;top:359px;letter-spacing:.55px">testIterator</div>
</div>
<div class="a sbar" style="left:1148px;top:463px;width:185px;height:18px"></div>
<div class="arr" style="left:1154px;top:467px;border-top:5px solid transparent;border-bottom:5px solid transparent;border-right:5px solid #9a9ba3"></div>
<div class="a" style="left:1165px;top:467px;width:141px;height:9px;background:#cbcdd7"></div>
<div class="arr" style="left:1322px;top:467px;border-top:5px solid transparent;border-bottom:5px solid transparent;border-left:5px solid #9a9ba3"></div>
<div class="a" style="left:1148px;top:481px;width:185px;height:20px;background:#4d6082"></div>
<div class="a" style="left:1149px;top:481px;width:45px;height:20px;background:#fff"></div>
<div class="t" style="left:1154px;top:484px;font-size:12px;line-height:16px">解决...</div>
<div class="t w" style="left:1200px;top:484px;font-size:12px;line-height:16px">类视图</div>
<div class="t w" style="left:1246px;top:484px;font-size:12px;line-height:16px">属性...</div>
<div class="t w" style="left:1292px;top:484px;font-size:12px;line-height:16px">团队...</div>
<div class="a" style="left:1359px;top:87px;width:7px;height:96px;background:#3b4e73"></div>
<div class="a" style="left:1359px;top:189px;width:7px;height:32px;background:#3b4e73"></div>
<div class="a" style="left:1359px;top:226px;width:7px;height:32px;background:#3b4e73"></div>
<div class="vt" style="left:1355px;top:88px">服务器资源管理器</div>
<div class="vt" style="left:1355px;top:192px">通知</div>
<div class="vt" style="left:1355px;top:229px">属性</div>
<div class="a" style="left:1345px;top:339px;width:21px;height:61px;filter:blur(.7px)">
<div class="a" style="left:0;top:0;width:15px;height:21px;background:#3e5b65;border-radius:4px 0 0 0"></div><div class="a" style="left:15px;top:0;width:6px;height:21px;background:#5e9a7b"></div>
<div class="a" style="left:0;top:21px;width:15px;height:20px;background:#60a67e"></div><div class="a" style="left:15px;top:21px;width:6px;height:20px;background:#7dd58e"></div>
<div class="a" style="left:0;top:41px;width:15px;height:20px;background:#3a5563"></div><div class="a" style="left:15px;top:41px;width:6px;height:20px;background:#4a8a6d"></div>
</div>

<!-- CMD -->
<div class="a" id="cmd"></div>
<div class="a" id="con"></div>
<div class="a" id="conscroll"></div>
<div class="a" style="left:432px;top:105px;width:15px;height:12px;background:#000;border-top:2px solid #c8c8c8"></div>
<div class="t" style="left:433px;top:108px;font-size:7px;line-height:8px;color:#fff;font-weight:bold;letter-spacing:-.3px">C:\_</div>
<div class="t" style="left:637px;top:103px;font-size:15px;line-height:18px;color:#14303a;letter-spacing:.65px">C:\WINDOWS\system32\cmd.exe</div>
<div class="a" style="left:998px;top:108px;width:8px;height:3px;background:#14303a"></div>
<div class="a" style="left:1024px;top:102px;width:10px;height:8px;border:1px solid #14303a;border-top-width:2px"></div>
<div class="a" style="left:1042px;top:95.5px;width:45px;height:19.7px;background:#d9484b"></div>
<svg class="a" style="left:1060px;top:102px" width="10" height="9" viewBox="0 0 10 9"><path d="M1 0.7 L9 8.3 M9 0.7 L1 8.3" stroke="#fff" stroke-width="1.8"/></svg>
<div class="t mono" style="left:428px;top:129px;font-size:12.5px;font-weight:bold;line-height:16px;letter-spacing:.5px;white-space:pre;color:#000">1 2 3 4 5 6 7 8 9</div>
<div class="t mono" style="left:428px;top:146px;font-size:16px;line-height:17px;white-space:pre;color:#000">请按任意键继续<span style="font-size:13.33px;font-weight:bold">. . .</span></div>
<div class="t mono" style="left:428px;top:513px;height:15px;overflow:hidden;font-size:16px;line-height:17px;white-space:pre;color:#000">搜狗拼音输入法 全 ：</div>
<svg class="a" style="left:1073px;top:133px" width="10" height="8" viewBox="0 0 10 8"><path d="M1 6.5 L5 2 L9 6.5" fill="none" stroke="#3c3c3c" stroke-width="1.8"/></svg>
<div class="a" style="left:1070px;top:145px;width:15px;height:31px;background:#cdcdcd"></div>
<svg class="a" style="left:1073px;top:516px" width="10" height="8" viewBox="0 0 10 8"><path d="M1 1.5 L5 6 L9 1.5" fill="none" stroke="#3c3c3c" stroke-width="1.8"/></svg>

</body></html>
